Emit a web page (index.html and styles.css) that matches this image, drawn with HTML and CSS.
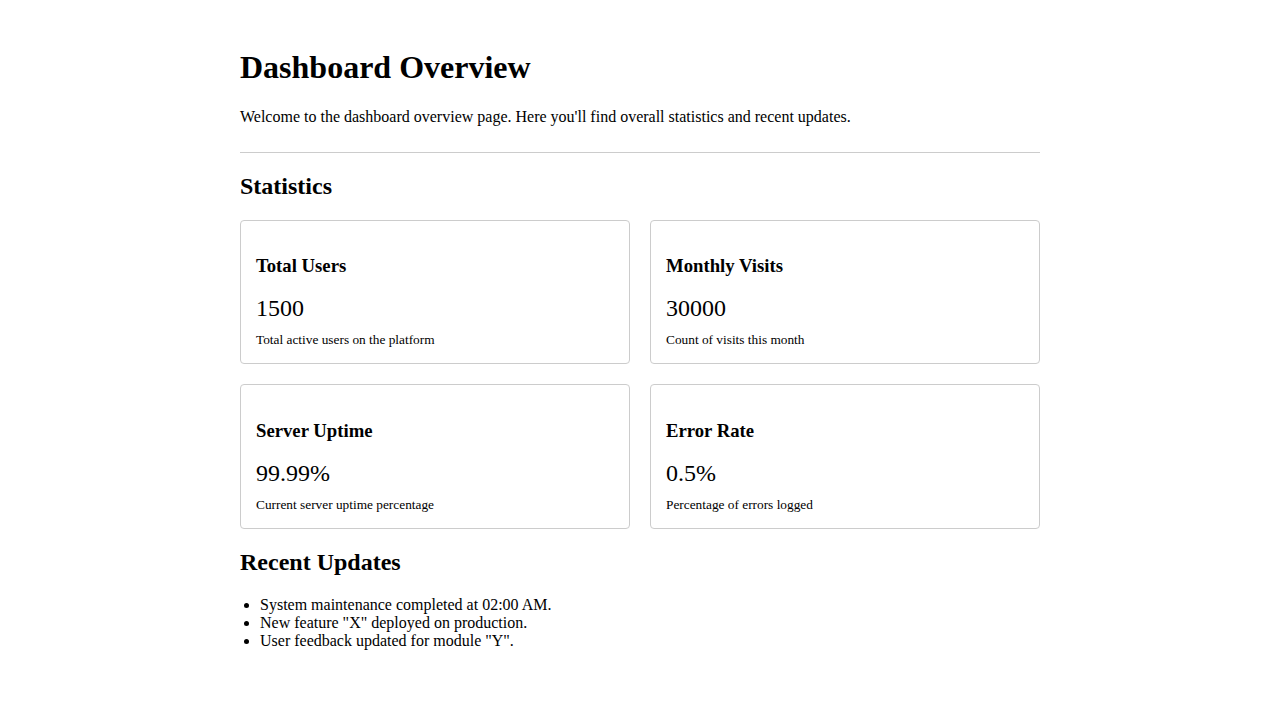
FILE: index.html
```html
<!DOCTYPE html>
<html lang="en">
<head>
<meta charset="utf-8">
<title>Dashboard Overview</title>
<link rel="stylesheet" href="styles.css">
</head>
<body>
<div class="container">
  <header class="page-header">
    <h1>Dashboard Overview</h1>
    <p>Welcome to the dashboard overview page. Here you'll find overall statistics and recent updates.</p>
  </header>
  <section>
    <h2>Statistics</h2>
    <div class="stats-grid">
      <div class="card">
        <h3>Total Users</h3>
        <p class="value">1500</p>
        <p class="desc">Total active users on the platform</p>
      </div>
      <div class="card">
        <h3>Monthly Visits</h3>
        <p class="value">30000</p>
        <p class="desc">Count of visits this month</p>
      </div>
      <div class="card">
        <h3>Server Uptime</h3>
        <p class="value">99.99%</p>
        <p class="desc">Current server uptime percentage</p>
      </div>
      <div class="card">
        <h3>Error Rate</h3>
        <p class="value">0.5%</p>
        <p class="desc">Percentage of errors logged</p>
      </div>
    </div>
  </section>
  <section class="updates-section">
    <h2>Recent Updates</h2>
    <ul class="updates">
      <li>System maintenance completed at 02:00 AM.</li>
      <li>New feature "X" deployed on production.</li>
      <li>User feedback updated for module "Y".</li>
    </ul>
  </section>
</div>
</body>
</html>
```
FILE: styles.css
```css
body {
  margin: 8px;
  font-family: "Liberation Serif", "Times New Roman", serif;
  color: #000;
  background: #fff;
}
.container {
  max-width: 800px;
  margin: 0 auto;
  padding: 20px;
}
.page-header {
  border-bottom: 1px solid #ccc;
  padding-bottom: 10px;
}
h1 {
  font-size: 32px;
  margin: 21.44px 0;
}
h2 {
  font-size: 24px;
  margin: 19.92px 0;
}
.updates-section h2 {
  margin-top: 20.3px;
  margin-bottom: 20.5px;
}
.stats-grid {
  display: grid;
  grid-template-columns: 1fr 1fr;
  gap: 20px;
}
.card {
  border: 1px solid #ccc;
  border-radius: 4px;
  padding: 15px;
}
.card h3 {
  font-size: 18.72px;
  margin: 19.72px 0 17.72px;
}
.card .value {
  font-size: 24px;
  margin: 10px 0;
}
.card .desc {
  font-size: 13.33px;
  margin: 0;
}
.updates {
  padding-left: 20px;
  margin: 16px 0;
}
```
